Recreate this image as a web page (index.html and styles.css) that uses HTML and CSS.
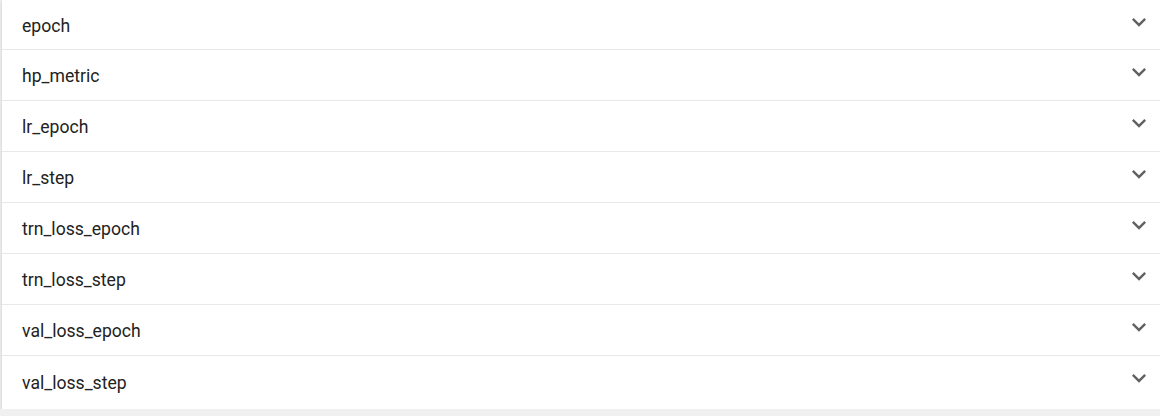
FILE: index.html
```html
<!DOCTYPE html>
<html>
<head>
<meta charset="utf-8">
<link rel="stylesheet" href="styles.css">
</head>
<body>
<div class="card">
  <div class="row first"><span class="name">epoch</span><svg class="chev" viewBox="0 0 24 24"><path d="M16.59 8.59L12 13.17 7.41 8.59 6 10l6 6 6-6z"/></svg></div>
  <div class="row"><span class="name">hp_metric</span><svg class="chev" viewBox="0 0 24 24"><path d="M16.59 8.59L12 13.17 7.41 8.59 6 10l6 6 6-6z"/></svg></div>
  <div class="row"><span class="name">lr_epoch</span><svg class="chev" viewBox="0 0 24 24"><path d="M16.59 8.59L12 13.17 7.41 8.59 6 10l6 6 6-6z"/></svg></div>
  <div class="row"><span class="name">lr_step</span><svg class="chev" viewBox="0 0 24 24"><path d="M16.59 8.59L12 13.17 7.41 8.59 6 10l6 6 6-6z"/></svg></div>
  <div class="row"><span class="name">trn_loss_epoch</span><svg class="chev" viewBox="0 0 24 24"><path d="M16.59 8.59L12 13.17 7.41 8.59 6 10l6 6 6-6z"/></svg></div>
  <div class="row"><span class="name">trn_loss_step</span><svg class="chev" viewBox="0 0 24 24"><path d="M16.59 8.59L12 13.17 7.41 8.59 6 10l6 6 6-6z"/></svg></div>
  <div class="row"><span class="name">val_loss_epoch</span><svg class="chev" viewBox="0 0 24 24"><path d="M16.59 8.59L12 13.17 7.41 8.59 6 10l6 6 6-6z"/></svg></div>
  <div class="row last"><span class="name">val_loss_step</span><svg class="chev" viewBox="0 0 24 24"><path d="M16.59 8.59L12 13.17 7.41 8.59 6 10l6 6 6-6z"/></svg></div>
</div>
</body>
</html>
```
FILE: styles.css
```css
html, body {
  margin: 0;
  padding: 0;
  background: #f0f0f0;
}
body {
  font-family: Roboto, "Liberation Sans", sans-serif;
  padding-left: 2px;
}
.card {
  background: #fff;
  box-shadow: 0 1px 4px rgba(0,0,0,0.16);
}
.row {
  height: 50px;
  display: flex;
  align-items: center;
  justify-content: space-between;
  padding: 0 7px 0 20px;
  border-bottom: 1px solid #e8e8e8;
}
.row.first {
  height: 49px;
}
.row.last {
  border-bottom: none;
  height: 53px;
  padding-bottom: 2px;
  box-sizing: border-box;
}
.name {
  font-size: 17.6px;
  color: #222222;
  padding-top: 2px;
}
.chev {
  width: 28px;
  height: 28px;
  fill: #616161;
  align-self: flex-start;
  margin-top: 8px;
}
```
